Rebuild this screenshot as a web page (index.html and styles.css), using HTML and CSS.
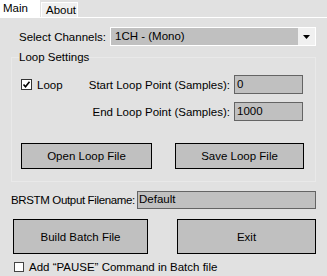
FILE: index.html
```html
<!DOCTYPE html>
<html lang="en">

<head>
    <meta charset="UTF-8">
    <title>BRSTM Loop Tool</title>
    <link rel="stylesheet" href="styles.css">
</head>

<body>
    <div class="window">
        <div class="tabs">
            <div class="tab active">Main</div>
            <div class="tab">About</div>
        </div>

        <div class="page">
            <div class="channel-row">
                <span class="channel-label">Select Channels:</span>
                <div class="combo">
                    <span class="combo-text">1CH - (Mono)</span>
                    <span class="combo-arrow">
                        <svg width="7" height="4" viewBox="0 0 7 4"><path d="M0 0h7L3.5 4z" fill="#000"/></svg>
                    </span>
                </div>
            </div>

            <div class="group">
                <div class="group-title">Loop Settings</div>
                <div class="loop-fields">
                    <div class="field-row">
                        <label class="check">
                            <span class="box checked">
                                <svg width="9" height="9" viewBox="0 0 9 9"><path d="M1.5 4.5l2 2.2 4-5" stroke="#000" stroke-width="1.6" fill="none"/></svg>
                            </span>
                            Loop
                        </label>
                        <span class="field-label">Start Loop Point (Samples):</span>
                        <div class="input">0</div>
                    </div>
                    <div class="field-row second">
                        <span class="field-label">End Loop Point (Samples):</span>
                        <div class="input">1000</div>
                    </div>
                </div>
                <div class="group-buttons">
                    <button class="btn open-btn">Open Loop File</button>
                    <button class="btn save-btn">Save Loop File</button>
                </div>
            </div>

            <div class="output-row">
                <span class="output-label">BRSTM Output Filename:</span>
                <div class="input output-input">Default</div>
            </div>

            <div class="main-buttons">
                <button class="btn big build-btn">Build Batch File</button>
                <button class="btn big exit-btn">Exit</button>
            </div>

            <label class="check pause">
                <span class="box"></span>
                Add “PAUSE” Command in Batch file
            </label>
        </div>
    </div>
</body>

</html>
```

FILE: styles.css
```css
body {
    margin: 0;
    font-family: "Liberation Sans", Arial, sans-serif;
    font-size: 11.5px;
    color: #000;
}

.window {
    width: 327px;
    height: 276px;
    background: #e1e1e1;
    overflow: hidden;
    white-space: nowrap;
}

.tabs {
    display: flex;
    align-items: flex-end;
    height: 17px;
    border-bottom: 1px solid #fff;
}

.tab {
    height: 15px;
    padding: 0 4px;
    line-height: 15px;
    background: #f0f0f0;
    border: 1px solid #fff;
    border-bottom: none;
    box-sizing: border-box;
    width: 37px;
    margin-left: 1px;
}

.tab.active {
    background: #fff;
    height: 18px;
    width: 40px;
    margin: 0 0 -1px 0;
    padding: 0 3px;
    line-height: 17px;
    border: none;
}

.page {
    padding-left: 11px;
}

.channel-row {
    display: flex;
    align-items: center;
    margin-top: 9px;
    padding-left: 8px;
}

.channel-label {
    width: 91px;
}

.combo {
    display: flex;
    width: 206px;
    height: 19px;
    box-sizing: border-box;
    border: 1px solid #fff;
    background: #c0c0c0;
}

.combo-text {
    flex: 1;
    padding-left: 4px;
    line-height: 17px;
}

.combo-arrow {
    width: 17px;
    background: #f0f0f0;
    display: flex;
    align-items: center;
    justify-content: center;
}

.group {
    margin-top: 11px;
    width: 305px;
    height: 125px;
    box-sizing: border-box;
    border: 1px solid #e9e9e9;
    padding-left: 7px;
}

.group-title {
    margin-top: -8px;
    line-height: 14px;
    width: max-content;
    background: #e1e1e1;
}

.loop-fields {
    margin-top: 11px;
}

.field-row {
    display: flex;
    align-items: center;
    justify-content: flex-end;
    padding-right: 12px;
}

.field-row.second {
    margin-top: 8px;
}

.check {
    display: flex;
    align-items: center;
    gap: 5px;
    margin-right: auto;
    margin-left: 2px;
}

.box {
    width: 11px;
    height: 11px;
    box-sizing: border-box;
    border: 1px solid #333;
    background: #fff;
    display: flex;
    align-items: center;
    justify-content: center;
}

.field-label {
    margin-right: 4px;
}

.input {
    width: 69px;
    height: 19px;
    box-sizing: border-box;
    border: 1px solid #646464;
    background: #c0c0c0;
    padding-left: 2px;
    line-height: 16px;
}

.group-buttons {
    display: flex;
    gap: 23px;
    margin-top: 22px;
    padding-left: 2px;
}

.btn {
    font-family: inherit;
    font-size: 11.5px;
    color: #000;
    background: #c0c0c0;
    border: 1px solid #000;
    padding: 0;
    height: 26px;
}

.open-btn {
    width: 131px;
}

.save-btn {
    width: 129px;
}

.output-row {
    display: flex;
    align-items: center;
    margin-top: 9px;
}

.output-label {
    width: 126px;
    letter-spacing: -0.35px;
}

.output-input {
    width: 179px;
    height: 18px;
    padding-left: 1px;
    line-height: 15px;
}

.main-buttons {
    display: flex;
    gap: 29px;
    margin-top: 10px;
    padding-left: 2px;
}

.btn.big {
    height: 35px;
}

.build-btn {
    width: 135px;
}

.exit-btn {
    width: 139px;
}

.check.pause {
    margin-top: 7px;
    margin-left: 3px;
    gap: 5px;
}

.pause .box {
    width: 10px;
    height: 10px;
    border-color: #444;
}
```
